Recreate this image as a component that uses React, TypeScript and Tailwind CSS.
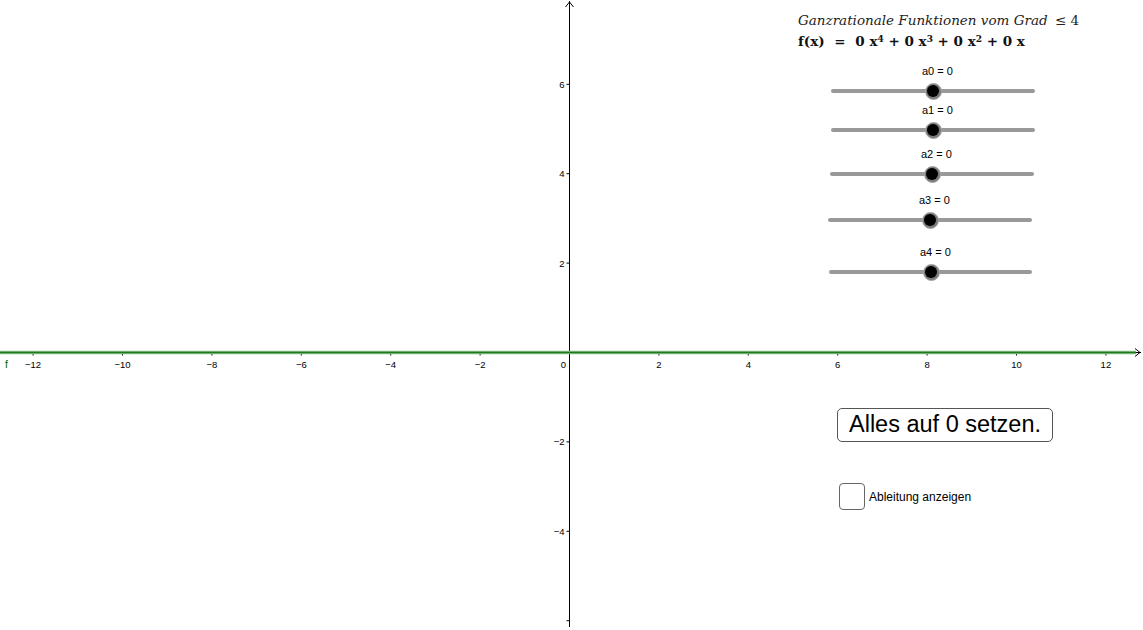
import React from 'react';

// GeoGebra-like graphics view: polynomial f(x) = a4 x^4 + ... + a0 with sliders
const OX = 569.5;
const OY = 352.5;
const UNIT = 44.7;

const sliders = [
  { name: 'a0', labelTop: 65, trackTop: 89, left: 831, width: 204, knob: 933 },
  { name: 'a1', labelTop: 104, trackTop: 128, left: 831, width: 204, knob: 933 },
  { name: 'a2', labelTop: 148, trackTop: 172, left: 830, width: 204, knob: 932 },
  { name: 'a3', labelTop: 194, trackTop: 218, left: 828, width: 204, knob: 930 },
  { name: 'a4', labelTop: 246, trackTop: 270, left: 829, width: 203, knob: 931 },
];

function fmt(n: number) {
  return n < 0 ? `\u2212${Math.abs(n)}` : `${n}`;
}

function Axes() {
  const xs = [-12, -10, -8, -6, -4, -2, 2, 4, 6, 8, 10, 12];
  const ys = [-4, -2, 2, 4, 6];
  return (
    <svg className="absolute inset-0" width={1143} height={630} viewBox="0 0 1143 630">
      {/* x axis */}
      <line x1={0} y1={OY} x2={1141} y2={OY} stroke="#000" strokeWidth={1} />
      <polyline points={`1135,${OY - 4} 1140,${OY} 1135,${OY + 4}`} fill="none" stroke="#000" strokeWidth={1} />
      {/* y axis */}
      <line x1={OX} y1={1} x2={OX} y2={627} stroke="#000" strokeWidth={1} />
      <polyline points={`${OX - 4},7 ${OX},2 ${OX + 4},7`} fill="none" stroke="#000" strokeWidth={1} />

      {xs.map((k) => {
        const x = OX + k * UNIT;
        return (
          <g key={`x${k}`}>
            <line x1={x} y1={OY} x2={x} y2={OY + 3} stroke="#000" strokeWidth={1} />
            <text
              x={x}
              y={OY + 15}
              textAnchor="middle"
              fontSize={9.5}
              fontFamily='"Liberation Sans", Arial, sans-serif'
              fill="#000"
            >
              {fmt(k)}
            </text>
          </g>
        );
      })}
      <text x={OX - 6} y={OY + 15} textAnchor="middle" fontSize={9.5} fontFamily='"Liberation Sans", Arial, sans-serif' fill="#000">
        0
      </text>

      {ys.map((k) => {
        const y = OY - k * UNIT;
        return (
          <g key={`y${k}`}>
            <line x1={OX - 3} y1={y} x2={OX} y2={y} stroke="#000" strokeWidth={1} />
            <text
              x={OX - 5}
              y={y + 3.5}
              textAnchor="end"
              fontSize={9.5}
              fontFamily='"Liberation Sans", Arial, sans-serif'
              fill="#000"
            >
              {fmt(k)}
            </text>
          </g>
        );
      })}
      {/* tick at -6, label cut off below the view */}
      <line x1={OX - 3} y1={OY + 6 * UNIT} x2={OX} y2={OY + 6 * UNIT} stroke="#000" strokeWidth={1} />

      {/* graph of f (constant 0) */}
      <line x1={0} y1={OY} x2={1136} y2={OY} stroke="#8cc08c" strokeWidth={3.5} />
      <line x1={0} y1={OY} x2={1136} y2={OY} stroke="#1f7a1f" strokeWidth={1.4} />
      <text x={5} y={OY + 15} fontSize={10.5} fontFamily='"Liberation Sans", Arial, sans-serif' fill="#006400">
        f
      </text>
    </svg>
  );
}

function Slider({ s }: { s: (typeof sliders)[number] }) {
  return (
    <>
      <div
        className="absolute text-[11px] leading-none text-black font-['Liberation_Sans',Arial,sans-serif] whitespace-nowrap"
        style={{ left: s.knob - 11, top: s.labelTop + 1 }}
      >
        {s.name} = 0
      </div>
      <div
        className="absolute h-[4px] rounded-full bg-[#999999]"
        style={{ left: s.left, top: s.trackTop, width: s.width }}
      />
      <div
        className="absolute w-[17px] h-[17px] rounded-full bg-[#7a7a7a] border border-[#a8a8a8] flex items-center justify-center"
        style={{ left: s.knob - 8.5, top: s.trackTop + 2 - 8.5 }}
      >
        <div className="w-[12px] h-[12px] rounded-full bg-black" />
      </div>
    </>
  );
}

export default function App() {
  return (
    <div className="relative w-[1143px] h-[630px] bg-white overflow-hidden">
      <Axes />

      <div className="absolute left-[798px] top-[14px] font-['DejaVu_Serif','Liberation_Serif',serif] text-[13.5px] italic leading-none text-[#222] whitespace-nowrap">
        Ganzrationale Funktionen vom Grad <span className="not-italic ml-[3px]">≤ 4</span>
      </div>
      <div className="absolute left-[798px] top-[35px] font-['DejaVu_Serif','Liberation_Serif',serif] text-[13.5px] font-bold leading-none text-[#111] whitespace-nowrap">
        f(x) <span className="mx-[5px]">=</span> 0 x<sup className="text-[9px]">4</sup> + 0 x<sup className="text-[9px]">3</sup> + 0 x
        <sup className="text-[9px]">2</sup> + 0 x
      </div>

      {sliders.map((s) => (
        <Slider key={s.name} s={s} />
      ))}

      <button className="absolute left-[837px] top-[408px] w-[216px] h-[34px] rounded-[5px] border border-[#555] bg-white flex items-center justify-center text-[23.5px] leading-none text-black font-['Liberation_Sans',Arial,sans-serif] whitespace-nowrap">
        Alles auf 0 setzen.
      </button>

      <div className="absolute left-[839px] top-[483px] flex items-center gap-[4px]">
        <div className="w-[26px] h-[27px] rounded-[4px] border border-[#666] bg-white" />
        <span className="text-[12px] text-black font-['Liberation_Sans',Arial,sans-serif]">Ableitung anzeigen</span>
      </div>
    </div>
  );
}
